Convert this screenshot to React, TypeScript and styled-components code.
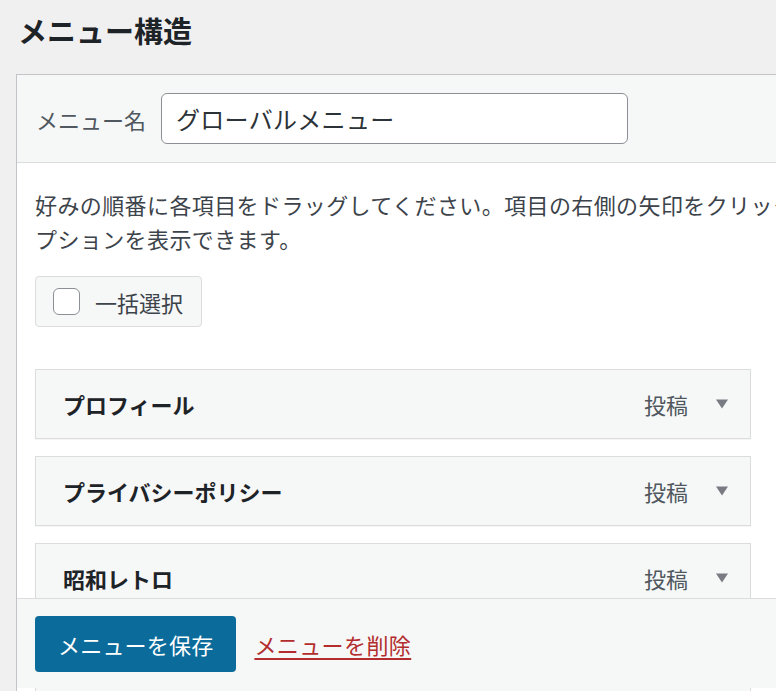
import React from "react";
import styled, { createGlobalStyle } from "styled-components";

const GlobalStyle = createGlobalStyle`
  html, body {
    margin: 0;
    padding: 0;
    background: #f0f0f1;
    overflow: hidden;
  }
  body {
    font-family: "Noto Sans CJK JP", "Noto Sans", sans-serif;
    color: #3c434a;
  }
`;

const Page = styled.div`
  height: 100vh;
  display: flex;
  flex-direction: column;
  padding-left: 16px;
  box-sizing: border-box;
  overflow: hidden;
`;

const Title = styled.h2`
  margin: 0 0 25px 2px;
  padding-top: 11px;
  font-size: 29px;
  line-height: 38px;
  font-weight: 700;
  color: #1d2327;
`;

const Box = styled.div`
  flex: 1;
  min-height: 0;
  width: 1100px;
  display: flex;
  flex-direction: column;
  background: #fff;
  border: 1px solid #c3c4c7;
  border-bottom: none;
  overflow: hidden;
`;

const Header = styled.div`
  flex: none;
  height: 87px;
  display: flex;
  align-items: center;
  gap: 15px;
  padding-left: 19px;
  background: #f6f7f7;
  border-bottom: 1px solid #dcdcde;
`;

const Label = styled.label`
  font-size: 22px;
  color: #50575e;
`;

const NameInput = styled.input`
  box-sizing: border-box;
  width: 467px;
  height: 51px;
  padding: 0 14px;
  border: 1px solid #8c8f94;
  border-radius: 6px;
  background: #fff;
  font-family: inherit;
  font-size: 24px;
  letter-spacing: 0.3px;
  color: #2c3338;
  outline: none;
`;

const Body = styled.div`
  flex: none;
  padding: 24px 18px 0;
`;

const Description = styled.p`
  margin: 0;
  width: 990px;
  font-size: 22px;
  line-height: 34px;
  letter-spacing: 0.4px;
  color: #3c434a;
`;

const BulkButton = styled.label`
  margin-top: 21px;
  box-sizing: border-box;
  height: 51px;
  display: inline-flex;
  align-items: center;
  gap: 15px;
  padding: 0 18px 0 17px;
  background: #f6f7f7;
  border: 1px solid #dcdcde;
  border-radius: 4px;
  font-size: 22px;
  color: #3c434a;
`;

const Check = styled.span`
  width: 27px;
  height: 27px;
  box-sizing: border-box;
  border: 1px solid #8c8f94;
  border-radius: 6px;
  background: #fff;
`;

const Items = styled.ul`
  list-style: none;
  margin: 42px 0 0;
  padding: 0;
  display: flex;
  flex-direction: column;
  gap: 17px;
`;

const Item = styled.li`
  box-sizing: border-box;
  width: 716px;
  height: 70px;
  display: flex;
  align-items: center;
  padding: 0 22px 0 27px;
  background: #f6f7f7;
  border: 1px solid #dcdcde;
  box-shadow: 0 1px 1px rgba(0, 0, 0, 0.04);
`;

const ItemTitle = styled.span`
  flex: 1;
  font-size: 22px;
  font-weight: 700;
  color: #1d2327;
`;

const ItemType = styled.span`
  font-size: 22px;
  color: #50575e;
  margin-right: 28px;
`;

const Footer = styled.div`
  position: sticky;
  bottom: 3px;
  flex: none;
  margin-top: 40px;
  display: flex;
  align-items: center;
  gap: 18px;
  padding: 17px 18px 16px;
  background: #f6f7f7;
  border-top: 1px solid #dcdcde;
`;

const SaveButton = styled.button`
  height: 56px;
  padding: 0 23px;
  border: none;
  border-radius: 4px;
  background: #0b6c9b;
  color: #fff;
  font-family: inherit;
  font-size: 22px;
  letter-spacing: 0.2px;
`;

const DeleteLink = styled.a`
  font-size: 22px;
  letter-spacing: 0.4px;
  color: #b32d2e;
  text-decoration: underline;
  text-underline-offset: 4px;
`;

const Arrow = () => (
  <svg width="12" height="10" viewBox="0 0 12 10">
    <path d="M0 0.5h12L6 9.5z" fill="#787c82" />
  </svg>
);

const menuItems = [
  { title: "プロフィール", type: "投稿" },
  { title: "プライバシーポリシー", type: "投稿" },
  { title: "昭和レトロ", type: "投稿" },
  { title: "お問い合わせ", type: "固定ページ" },
];

export default function App() {
  return (
    <Page>
      <GlobalStyle />
      <Title>メニュー構造</Title>
      <Box>
        <Header>
          <Label>メニュー名</Label>
          <NameInput defaultValue="グローバルメニュー" />
        </Header>
        <Body>
          <Description>
            好みの順番に各項目をドラッグしてください。項目の右側の矢印をクリックすると、追加の設定オプションを表示できます。
          </Description>
          <BulkButton>
            <Check />
            一括選択
          </BulkButton>
          <Items>
            {menuItems.map((item) => (
              <Item key={item.title}>
                <ItemTitle>{item.title}</ItemTitle>
                <ItemType>{item.type}</ItemType>
                <Arrow />
              </Item>
            ))}
          </Items>
        </Body>
        <Footer>
          <SaveButton>メニューを保存</SaveButton>
          <DeleteLink href="#">メニューを削除</DeleteLink>
        </Footer>
      </Box>
    </Page>
  );
}
